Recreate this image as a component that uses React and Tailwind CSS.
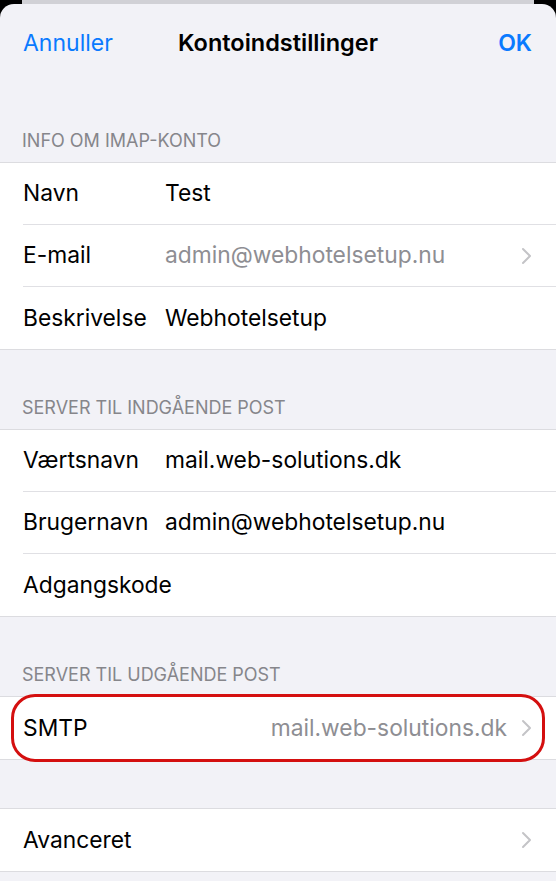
import React from "react";

function Chevron() {
  return (
    <svg width="11" height="18" viewBox="0 0 11 18" className="shrink-0">
      <path d="M2 2 L9 9 L2 16" fill="none" stroke="#c4c4c7" strokeWidth="2" strokeLinecap="round" strokeLinejoin="round" />
    </svg>
  );
}

function Row({ label, value, gray, chevron, last, alignRight }) {
  return (
    <div className="flex h-[62px] items-stretch pl-[23px]">
      <div className={"flex flex-1 items-center pr-[24px] " + (last ? "" : "border-b border-[#e0e0e4]")}>
        <span className="w-[142px] shrink-0 text-[22.8px] text-black">{label}</span>
        {value != null && (
          <span className={"flex-1 text-[22.8px] " + (alignRight ? "text-right " : "") + (gray ? "text-[#8e8e93]" : "text-black")}>
            {value}
          </span>
        )}
        {value == null && <span className="flex-1" />}
        {chevron && <span className="ml-[14px] flex items-center"><Chevron /></span>}
      </div>
    </div>
  );
}

function Header({ children }) {
  return (
    <div className="h-[79px] flex items-end pb-[8px] pl-[22px] text-[18px] text-[#86868b]">
      {children}
    </div>
  );
}

function Group({ children }) {
  return <div className="bg-white border-y border-[#dcdce0]">{children}</div>;
}

export default function App() {
  return (
    <div className="w-[556px] h-[881px] bg-black overflow-hidden" style={{ fontFamily: "Inter, 'Noto Sans', sans-serif" }}>
      <div className="relative h-[881px]">
        <div className="absolute left-[22px] right-[22px] top-0 h-[8px] bg-[#d1d1d6]" />
        <div className="absolute inset-x-0 top-[4px] bottom-0 rounded-t-[14px] bg-[#f2f2f7] flex flex-col">
          <div className="relative h-[80px] flex items-center justify-between px-[23px] pb-[2px]">
            <span className="text-[23px] text-[#0a7aff]">Annuller</span>
            <span className="text-[23px] font-semibold text-[#0a7aff] pr-[1px]">OK</span>
            <div className="absolute inset-x-0 top-0 h-[78px] flex items-center justify-center pointer-events-none">
              <span className="text-[23.5px] font-semibold text-black">Kontoindstillinger</span>
            </div>
          </div>
          <div className="h-[78px] flex items-end pb-[8px] pl-[22px] text-[18px] text-[#86868b]">INFO OM IMAP-KONTO</div>
          <Group>
            <Row label="Navn" value="Test" />
            <Row label="E-mail" value="admin@webhotelsetup.nu" gray chevron />
            <Row label="Beskrivelse" value="Webhotelsetup" last />
          </Group>
          <Header>SERVER TIL INDGÅENDE POST</Header>
          <Group>
            <Row label="Værtsnavn" value="mail.web-solutions.dk" />
            <Row label="Brugernavn" value="admin@webhotelsetup.nu" />
            <Row label="Adgangskode" value={null} last />
          </Group>
          <Header>SERVER TIL UDGÅENDE POST</Header>
          <div className="relative">
            <Group>
              <Row label="SMTP" value="mail.web-solutions.dk" gray alignRight chevron last />
            </Group>
            <div className="absolute left-[11px] right-[11px] top-[-2px] bottom-[-2px] rounded-[24px] border-[3.5px] border-[#d40f0f]" />
          </div>
          <div className="h-[48px]" />
          <Group>
            <Row label="Avanceret" value={null} chevron last />
          </Group>
        </div>
      </div>
    </div>
  );
}
